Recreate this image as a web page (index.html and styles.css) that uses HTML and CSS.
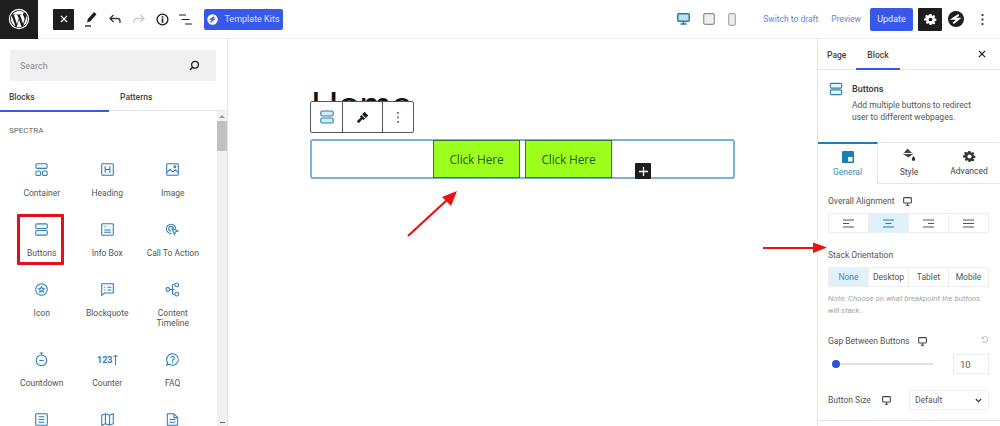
FILE: index.html
```html
<!DOCTYPE html>
<html lang="en">
<head>
<meta charset="utf-8">
<title>Editor</title>
<link rel="stylesheet" href="styles.css">
</head>
<body>
<div class="app">
  <header class="topbar">
    <div class="wp-logo">
      <svg width="24" height="24" viewBox="0 0 24 24"><circle cx="12" cy="12" r="9.6" fill="none" stroke="#fff" stroke-width="1.2"/><path fill="#fff" d="M3.9 12c0 3.2 1.9 6 4.6 7.3L4.6 8.7A8 8 0 0 0 3.9 12zM17.5 11.6c0-1-.4-1.7-.7-2.2-.4-.7-.8-1.3-.8-2 0-.8.6-1.5 1.4-1.5h.1A8.100 8.100 0 0 0 5.300 7.500h.5c.9 0 2.200-.1 2.200-.1.400 0 .5.600 0 .7 0 0-.4 0-1 .1l3 9.100 1.800-5.500-1.300-3.600c-.4 0-.9-.1-.9-.1-.4 0-.4-.7.100-.7 0 0 1.400.1 2.200.1.900 0 2.200-.1 2.200-.1.400 0 .5.600 0 .7 0 0-.4 0-1 .1l3 8.900.8-2.800c.4-1.100.6-1.900.6-2.600zM12.100 12.800l-2.500 7.200a8.100 8.100 0 0 0 5-.1l-.1-.1zM19.300 8.100c0 .3.100.6.100 1 0 .8-.2 1.700-.6 2.900l-2.500 7.100a8.100 8.100 0 0 0 3-11z"/></svg>
    </div>
    <div class="tools">
      <button class="close-btn"><svg width="12" height="12" viewBox="0 0 12 12"><path d="M3 3l6 6M9 3l-6 6" stroke="#fff" stroke-width="1.300"/></svg></button>
      <svg class="tool" width="14" height="16" viewBox="0 0 14 16"><path d="M10 1l2.500 2.200-6 7-3.500 1.300.9-3.500z" fill="#1e1e1e"/><path d="M1 15h6" stroke="#1e1e1e" stroke-width="1.300"/></svg>
      <svg class="tool" width="14" height="12" viewBox="0 0 14 12"><path d="M5.500 2L2 5.500 5.500 9M2 5.500h7.500c1.500 0 2.500 1 2.500 2.500v2" fill="none" stroke="#333" stroke-width="1.300"/></svg>
      <svg class="tool" width="14" height="12" viewBox="0 0 14 12"><path d="M8.500 2L12 5.500 8.500 9M12 5.500H4.500C3 5.500 2 6.500 2 8v2" fill="none" stroke="#ccc" stroke-width="1.300"/></svg>
      <svg class="tool" width="13" height="13" viewBox="0 0 14 14"><circle cx="7" cy="7" r="5.800" fill="none" stroke="#1e1e1e" stroke-width="1.400"/><path d="M7 6v4.500M7 3.500v1.500" stroke="#1e1e1e" stroke-width="1.800"/></svg>
      <svg class="tool" width="14" height="11" viewBox="0 0 14 11"><path d="M0 1h7M2.500 5.500h8M6 10h7" stroke="#1e1e1e" stroke-width="1.200"/></svg>
      <button class="kits"><svg width="11" height="11" viewBox="0 0 11 11"><circle cx="5.500" cy="5.500" r="5.200" fill="#fff"/><path d="M7.300 2.800L3.700 5.200h3.500L3.600 8.300" fill="none" stroke="#3858e9" stroke-width="1.300"/></svg>Template Kits</button>
    </div>
    <div class="actions">
      <div class="devices">
        <svg width="13" height="12" viewBox="0 0 13 12"><rect x=".8" y=".8" width="11.400" height="7.400" rx="1" fill="#bfe0ee" stroke="#1a7fb5" stroke-width="1.500"/><path d="M6.500 8.500v2.500M3.500 11h6" stroke="#1a7fb5" stroke-width="1.500"/></svg>
        <svg width="12" height="12" viewBox="0 0 12 12"><rect x=".7" y=".7" width="10.600" height="10.600" rx="1.500" fill="#eee" stroke="#8f8f8f" stroke-width="1.200"/></svg>
        <svg width="8" height="13" viewBox="0 0 8 13"><rect x=".7" y=".7" width="6.600" height="11.600" rx="1.200" fill="#eee" stroke="#a8a8a8" stroke-width="1.200"/></svg>
      </div>
      <a class="link draft">Switch to draft</a>
      <a class="link preview">Preview</a>
      <button class="update">Update</button>
      <button class="gear"><svg width="13" height="13" viewBox="-2 0 28 24"><path fill="#fff" d="M10 0h4l.7 3.200 2 .9 2.800-1.800 2.800 2.800-1.800 2.800.9 2 3.200.7v4l-3.200.7-.9 2 1.800 2.800-2.800 2.800-2.800-1.800-2 .9L14 24h-4l-.7-3.200-2-.9-2.800 1.800-2.800-2.800 1.800-2.800-.9-2L-2 14v-4l3.200-.7.9-2L.3 4.500l2.800-2.800 2.800 1.800 2-.9z"/><circle cx="12" cy="12" r="4" fill="#1e1e1e"/></svg></button>
      <svg class="spectra" width="16" height="16" viewBox="0 0 16 16"><circle cx="8" cy="8" r="8" fill="#1e1e1e"/><path d="M10.800 3.800L5 7.700h5.800L5.200 12.300" fill="none" stroke="#fff" stroke-width="2"/></svg>
      <svg class="dots" width="3" height="11" viewBox="0 0 3 11"><path d="M1.500 0v2M1.500 4.500v2M1.500 9v2" stroke="#333" stroke-width="1.800"/></svg>
    </div>
  </header>

  <main class="body">
    <aside class="inserter">
      <div class="search"><span>Search</span>
        <svg width="11" height="11" viewBox="0 0 11 11"><circle cx="6" cy="4.800" r="3.400" fill="none" stroke="#1e1e1e" stroke-width="1.300"/><path d="M3.500 7.300L1 10" stroke="#1e1e1e" stroke-width="1.500"/></svg>
      </div>
      <nav class="ins-tabs"><a class="ins-tab on">Blocks</a><a class="ins-tab">Patterns</a></nav>
      <div class="ins-main">
        <div class="ins-list">
          <h2 class="cat">SPECTRA</h2>
          <div class="grid">
            <div class="block"><svg class="bi" viewBox="0 0 16 16"><rect x="2" y="1.800" width="12" height="5" rx="1.500"/><rect x="2" y="9.500" width="5" height="5" rx="1.500"/><rect x="9" y="9.500" width="5" height="5" rx="1.500"/></svg><span>Container</span></div>
            <div class="block"><svg class="bi" viewBox="0 0 16 16"><rect x="1.800" y="1.800" width="12.400" height="12.400" rx="1"/><path d="M5.500 4.500v7M10.500 4.500v7M5.500 8h5"/></svg><span>Heading</span></div>
            <div class="block"><svg class="bi" viewBox="0 0 16 16"><rect x="1.800" y="1.800" width="12.400" height="12.400" rx="1"/><path d="M2 11l3.500-3 3 2.500 2.500-2 3 2.500"/><circle cx="10.500" cy="5" r="1"/></svg><span>Image</span></div>
            <div class="block picked"><svg class="bi" viewBox="0 0 16 16"><rect x="1.800" y="2" width="12.400" height="5" rx="1.500"/><rect x="1.800" y="9" width="12.400" height="5" rx="1.500"/></svg><span>Buttons</span></div>
            <div class="block"><svg class="bi" viewBox="0 0 16 16"><rect x="1.800" y="1.800" width="12.400" height="12.400" rx="1"/><path d="M4.500 5h1.500M4.500 8.500h7M4.500 11h7"/></svg><span>Info Box</span></div>
            <div class="block"><svg class="bi" viewBox="0 0 16 16"><path d="M11.500 7.500A5 5 0 1 0 7 12.300M9 7A2.500 2.500 0 1 0 6.500 9.500"/><path d="M7.500 7l6.500 2.500-2.800 1-1 2.800z"/></svg><span>Call To Action</span></div>
            <div class="block"><svg class="bi" viewBox="0 0 16 16"><circle cx="8" cy="8" r="6.200"/><path d="M8 5l.9 2 2.100.2-1.600 1.400.5 2.100L8 9.600l-1.900 1.100.5-2.100L5 7.200 7.100 7z"/></svg><span>Icon</span></div>
            <div class="block"><svg class="bi" viewBox="0 0 16 16"><path d="M1.800 1.800h12.400v10H5l-3.200 2.500z"/><path d="M4.500 5.500h1M4.500 8.500h1M8 5.500h4M8 8.500h4"/></svg><span>Blockquote</span></div>
            <div class="block"><svg class="bi" viewBox="0 0 16 16"><circle cx="3" cy="8" r="2"/><circle cx="12.500" cy="3" r="2"/><circle cx="12.500" cy="13" r="2"/><path d="M5 8h5M8 3h2.500M8 13h2.500M8 3v10"/></svg><span>Content Timeline</span></div>
            <div class="block"><svg class="bi" viewBox="0 0 16 16"><circle cx="8" cy="9" r="5.700"/><path d="M6 1h4M8 1v2.300M5.800 9h4.400"/></svg><span>Countdown</span></div>
            <div class="block"><b class="count">123<svg width="5" height="11" viewBox="0 0 5 11"><path d="M2.500 11V1M.5 3l2-2 2 2" fill="none" stroke="#2f7fb0" stroke-width="1"/></svg></b><span>Counter</span></div>
            <div class="block"><svg class="bi" viewBox="0 0 16 16"><path d="M8 1.800a6.200 6.200 0 1 1-3.500 11.300l-2.700 1 1-2.600A6.200 6.200 0 0 1 8 1.800z"/><path d="M6.200 6.300A1.900 1.900 0 1 1 8 8.500v1.500M8 11v1"/></svg><span>FAQ</span></div>
            <div class="block"><svg class="bi" viewBox="0 0 16 16"><rect x="1.800" y="1.800" width="12.400" height="12.400" rx="1"/><path d="M5 5h6M5 8h6M5 11h6"/></svg></div>
            <div class="block"><svg class="bi" viewBox="0 0 16 16"><path d="M1.800 3.500l4-1.700 4.400 1.700 4-1.700v10.700l-4 1.700-4.400-1.700-4 1.700zM5.800 2v10.500M10.200 3.500v10.500"/></svg></div>
            <div class="block"><svg class="bi" viewBox="0 0 16 16"><path d="M2.500 1.800h7l4 4v8.400h-11zM9.500 2v4h4M5 8h6M5 11h6"/></svg></div>
          </div>
        </div>
        <div class="scrollbar"><i class="up"></i><i class="thumb"></i><i class="down"></i></div>
      </div>
    </aside>

    <section class="canvas">
      <h1 class="title">Home</h1>
      <div class="toolbar">
        <div class="tb-cell c1"><svg width="16" height="16" viewBox="0 0 16 16" fill="#d5eaf6" stroke="#2f7fb0" stroke-width="1.100"><rect x="1.800" y="2" width="12.400" height="5" rx="1.500"/><rect x="1.800" y="9" width="12.400" height="5" rx="1.500"/></svg></div>
        <div class="tb-cell c2"><svg width="13" height="13" viewBox="0 0 14 14"><path d="M9.200.8l4 4-2.700 2.700-4-4z" fill="#1e1e1e"/><path d="M5.800 4.200l4 4-1.400 1.400-1.600-.6L3 13.200.8 11l4.200-3.800-.6-1.600z" fill="#1e1e1e"/></svg></div>
        <div class="tb-cell c3"><svg width="2" height="11" viewBox="0 0 2 11"><path d="M1 0v2M1 4.500v2M1 9v2" stroke="#555" stroke-width="1.400"/></svg></div>
      </div>
      <div class="group">
        <a class="cta">Click Here</a>
        <a class="cta">Click Here</a>
        <span class="plus"><svg width="9" height="9" viewBox="0 0 10 10"><path d="M5 0v10M0 5h10" stroke="#fff" stroke-width="1.400"/></svg></span>
      </div>
    </section>

    <aside class="settings">
      <nav class="set-tabs"><a class="set-tab">Page</a><a class="set-tab on">Block</a>
        <svg class="set-close" width="8" height="8" viewBox="0 0 9 9"><path d="M1 1l7 7M8 1L1 8" stroke="#1e1e1e" stroke-width="1.400"/></svg>
      </nav>
      <div class="card">
        <svg width="14" height="14" viewBox="0 0 16 16" fill="#e8f3fa" stroke="#2f7fb0" stroke-width="1.300"><rect x="1.500" y="1.500" width="13" height="5.500" rx="1.500"/><rect x="1.500" y="9" width="13" height="5.500" rx="1.500"/></svg>
        <div class="card-text"><h3>Buttons</h3><p>Add multiple buttons to redirect user to different webpages.</p></div>
      </div>
      <div class="kind-tabs">
        <a class="kind on"><svg width="12" height="12" viewBox="0 0 12 12"><path d="M0 1a1 1 0 0 1 1-1h10a1 1 0 0 1 1 1v10a1 1 0 0 1-1 1H1a1 1 0 0 1-1-1z" fill="#1a7fb5"/><rect x="6" y="6" width="4.500" height="4.500" fill="#fff"/></svg><span>General</span></a>
        <a class="kind style"><svg width="14" height="14" viewBox="0 0 14 14"><path d="M5.500 .5l5.500 5.500-4.500 3.500L1 6z" fill="#444"/><path d="M11.500 8c1 1.500 1.700 2.300 1.700 3.300a1.700 1.700 0 0 1-3.400 0c0-1 .7-1.800 1.700-3.300z" fill="#333"/><path d="M1.500 5.500h8.500" stroke="#fff"/></svg><span>Style</span></a>
        <a class="kind adv"><svg width="13" height="13" viewBox="-2 0 28 24"><path fill="#333" d="M10 0h4l.7 3.200 2 .9 2.800-1.800 2.800 2.800-1.800 2.800.9 2 3.200.7v4l-3.200.7-.9 2 1.800 2.800-2.800 2.800-2.800-1.800-2 .9L14 24h-4l-.7-3.200-2-.9-2.800 1.800-2.800-2.800 1.800-2.800-.9-2L-2 14v-4l3.200-.7.9-2L.3 4.500l2.800-2.800 2.800 1.800 2-.9z"/><circle cx="12" cy="12" r="4.500" fill="#fff"/></svg><span>Advanced</span></a>
      </div>
      <div class="panel">
        <div class="label first">Overall Alignment <svg class="mon" width="9" height="9" viewBox="0 0 10 10"><rect x=".7" y=".7" width="8.600" height="6" rx=".8" fill="none" stroke="#444" stroke-width="1.200"/><path d="M5 7v2M3 9.200h4" stroke="#444" stroke-width="1.200"/></svg></div>
        <div class="seg align">
          <a class="seg-i"><svg width="13" height="9" viewBox="0 0 13 9"><path d="M1 1h11M1 4.500h6M1 8h11" stroke="#555" stroke-width="1"/></svg></a>
          <a class="seg-i on"><svg width="13" height="9" viewBox="0 0 13 9"><path d="M1 1h11M3.500 4.500h6M1 8h11" stroke="#1a7fb5" stroke-width="1"/></svg></a>
          <a class="seg-i"><svg width="13" height="9" viewBox="0 0 13 9"><path d="M1 1h11M6 4.500h6M1 8h11" stroke="#555" stroke-width="1"/></svg></a>
          <a class="seg-i"><svg width="13" height="9" viewBox="0 0 13 9"><path d="M1 1h11M1 4.500h11M1 8h11" stroke="#555" stroke-width="1"/></svg></a>
        </div>
        <div class="label stack">Stack Orientation</div>
        <div class="seg text">
          <a class="seg-i on">None</a><a class="seg-i">Desktop</a><a class="seg-i">Tablet</a><a class="seg-i">Mobile</a>
        </div>
        <p class="note">Note: Choose on what breakpoint the buttons will stack.</p>
        <div class="label gap-label"><span>Gap Between Buttons</span><svg class="mon" width="9" height="9" viewBox="0 0 10 10"><rect x=".7" y=".7" width="8.600" height="6" rx=".8" fill="none" stroke="#444" stroke-width="1.200"/><path d="M5 7v2M3 9.200h4" stroke="#444" stroke-width="1.200"/></svg>
          <svg class="reset" width="8" height="8" viewBox="0 0 8 8"><path d="M1.500 1.500a3 3 0 1 1-.5 3.500M1 .5v2h2" fill="none" stroke="#aaa" stroke-width=".8"/></svg></div>
        <div class="slider-row">
          <div class="track"><i class="knob"></i></div>
          <div class="num">10</div>
        </div>
        <div class="size-row">
          <span class="size-label">Button Size</span>
          <svg class="mon" width="9" height="9" viewBox="0 0 10 10"><rect x=".7" y=".7" width="8.600" height="6" rx=".8" fill="none" stroke="#444" stroke-width="1.200"/><path d="M5 7v2M3 9.200h4" stroke="#444" stroke-width="1.200"/></svg>
          <div class="select"><span>Default</span><svg width="7" height="5" viewBox="0 0 7 5"><path d="M.8 1l2.700 2.700L6.200 1" fill="none" stroke="#333" stroke-width="1.100"/></svg></div>
        </div>
      </div>
      <div class="panel-end"></div>
    </aside>
  </main>

  <svg class="arrows" width="1000" height="426" viewBox="0 0 1000 426">
    <path d="M408 236L447 200" stroke="#ee1111" stroke-width="2.200"/>
    <path d="M457 191L451 206 442 197z" fill="#ee1111"/>
    <path d="M763 248H814" stroke="#ee1111" stroke-width="2.200"/>
    <path d="M827 247.500L813 242.500V253z" fill="#ee1111"/>
  </svg>
</div>
</body>
</html>
```
FILE: styles.css
```css
*, *::before, *::after { box-sizing: border-box; }
html, body { margin: 0; padding: 0; }
body { font-family: Roboto, "Noto Sans", sans-serif; color: #444; background: #fff; }
h1, h2, h3, p { margin: 0; font-weight: 400; }
button { border: 0; padding: 0; font: inherit; }
.app { position: relative; width: 1000px; height: 426px; overflow: hidden; display: flex; flex-direction: column; }

.topbar { height: 39px; flex: none; display: flex; align-items: center; border-bottom: 1px solid #eeeeee; }
.wp-logo { width: 38px; height: 39px; background: #1e1e1e; display: flex; align-items: center; justify-content: center; }
.tools { display: flex; align-items: center; margin-left: 15px; gap: 10px; }
.close-btn { width: 21px; height: 21px; background: #1e1e1e; display: flex; align-items: center; justify-content: center; border-radius: 1px; }
.tool { flex: none; }
.kits { margin-left: 1px; width: 79px; height: 21px; background: #3858e9; color: #dfe5ff; border-radius: 2px; font-size: 9px; display: flex; align-items: center; justify-content: center; gap: 6px; }
.actions { margin-left: auto; display: flex; align-items: center; }
.devices { display: flex; align-items: center; gap: 13px; margin-right: 27px; }
.link { font-size: 8.500px; color: #6c7fe0; }
.preview { margin-left: 13px; }
.update { margin-left: 9px; width: 43px; height: 23px; background: #3858e9; color: #e8ecff; font-size: 9px; border-radius: 2px; }
.gear { margin-left: 5px; width: 24px; height: 23px; background: #1e1e1e; display: flex; align-items: center; justify-content: center; border-radius: 1px; }
.spectra { margin-left: 6px; }
.dots { margin-left: 17px; margin-right: 16px; }

.body { flex: 1; min-height: 0; display: flex; }
.inserter { width: 228px; flex: none; border-right: 1px solid #e4e4e4; display: flex; flex-direction: column; }
.search { margin: 11px 11px 0 10px; height: 31px; background: #f0f0f0; border-radius: 1px; display: flex; align-items: center; justify-content: space-between; padding: 0 16px 0 10px; font-size: 9px; color: #8a8a8a; flex: none; }
.ins-tabs { display: flex; height: 30px; flex: none; border-bottom: 1px solid #e6e6e6; }
.ins-tab { width: 109px; padding: 11px 0 0 9px; font-size: 8.500px; font-weight: 500; color: #444; }
.ins-tab + .ins-tab { padding-left: 11px; }
.ins-tab.on { box-shadow: inset 0 -2px 0 #3858e9; height: 31px; }
.ins-main { flex: 1; min-height: 0; display: flex; }
.ins-list { flex: 1; min-width: 0; overflow: hidden; padding-top: 14px; }
.cat { font-size: 8px; color: #666; padding-left: 9px; line-height: 12px; }
.grid { display: grid; grid-template-columns: repeat(3, 65.500px); padding-left: 9px; margin-top: 25px; }
.block { padding-bottom: 24px; display: flex; flex-direction: column; align-items: center; text-align: center; font-size: 8.500px; line-height: 10px; color: #555; gap: 11px; }
.block span { width: 56px; }
.block .count { height: 15px; }
.bi { width: 15px; height: 15px; fill: #f4f9fd; stroke: #2f7fb0; stroke-width: 1.100; flex: none; }
.count { display: flex; align-items: center; color: #2f7fb0; font-size: 9px; font-weight: 700; }
.picked { position: relative; }
.picked::after { content: ""; position: absolute; left: 8px; top: -8px; width: 47px; height: 51px; border: 3px solid #e60e1c; border-radius: 1px; }
.scrollbar { width: 10px; flex: none; background: #f1f1f1; display: flex; flex-direction: column; align-items: center; }
.up { margin-top: 4px; width: 0; height: 0; border: 3px solid transparent; border-bottom-color: #999; border-top: 0; }
.thumb { width: 10px; height: 30px; margin-top: 3px; background: #c1c1c1; }
.down { margin-top: auto; margin-bottom: 3px; width: 5px; height: 1px; background: #666; }

.canvas { flex: 1; min-width: 0; position: relative; padding-left: 82px; overflow: hidden; }
.title { font-family: "Liberation Sans", sans-serif; font-size: 38px; line-height: 46px; color: #111; margin-top: 44px; height: 48px; padding-left: 1px; white-space: nowrap; overflow: hidden; }
.toolbar { position: absolute; left: 82px; top: 62px; width: 104px; height: 32px; display: flex; background: #fff; border: 1px solid #555; border-radius: 2px; }
.tb-cell { display: flex; align-items: center; justify-content: center; }
.c1 { width: 31px; }
.c2 { width: 40px; border-left: 1px solid #555; }
.c3 { flex: 1; border-left: 1px solid #555; }
.group { position: relative; margin-top: 8px; width: 425px; height: 40px; border: 2px solid #78b3d3; border-radius: 3px; display: flex; justify-content: center; align-items: flex-end; gap: 5px; }
.cta { width: 87px; height: 38px; margin-bottom: -1px; background: #9cff1c; border: 1px solid #3d6f40; display: flex; align-items: center; justify-content: center; font-size: 12px; color: #2b5a1e; font-family: "Open Sans", sans-serif; letter-spacing: -.2px; }
.plus { position: absolute; left: 323px; top: 22px; width: 16px; height: 16px; background: #1e1e1e; display: flex; align-items: center; justify-content: center; border-radius: 1px; }

.settings { width: 183px; flex: none; border-left: 1px solid #e6e6e6; display: flex; flex-direction: column; }
.set-tabs { height: 31px; flex: none; display: flex; align-items: flex-start; border-bottom: 1px solid #e6e6e6; padding-left: 9px; font-size: 8.500px; font-weight: 500; color: #444; }
.set-tab { padding-top: 11px; height: 31px; }
.set-tab + .set-tab { margin-left: 10px; padding: 11px 11px 0; box-shadow: inset 0 -2px 0 #3858e9; }
.set-close { margin-left: auto; margin-right: 14px; margin-top: 11px; }
.card { display: flex; gap: 9px; padding: 12px 11px 0 11px; height: 72px; flex: none; }
.card svg { flex: none; }
.card-text h3 { font-size: 9px; font-weight: 500; line-height: 12px; color: #333; margin-top: 1px; }
.card-text p { font-size: 8.500px; line-height: 12px; color: #555; margin-top: 4px; }
.kind-tabs { display: flex; height: 42px; flex: none; border-bottom: 1px solid #e6e6e6; }
.kind { width: 60px; display: flex; flex-direction: column; align-items: center; padding-top: 7px; gap: 3px; font-size: 8.500px; line-height: 12px; color: #444; border-top: 1px solid #e6e6e6; }
.kind.on { border-top: 2px solid #1a7fb5; border-right: 1px solid #e6e6e6; color: #3d8bb8; height: 42px; background: #fff; }
.kind.style { padding-top: 5px; margin-left: 1px; }
.kind.style span { margin-top: 1px; }
.kind.adv { gap: 2px; }
.panel { padding: 11px 11px 0 10px; flex: none; }
.label { font-size: 8.500px; line-height: 12px; color: #555; display: flex; align-items: center; }
.mon { flex: none; }
.first .mon { margin-left: 8px; }
.seg { display: flex; border: 1px solid #eeeeee; width: 161px; height: 20px; margin-top: 6px; }
.seg-i { flex: 1; display: flex; align-items: center; justify-content: center; border-left: 1px solid #eee; font-size: 8.500px; color: #555; }
.seg-i:first-child { border-left: 0; }
.seg-i.on { background: #dff1fb; color: #3d8bb8; }
.stack { margin-top: 16px; }
.note { font-size: 7.800px; font-style: italic; color: #a5a5a5; line-height: 12px; margin-top: 6px; width: 160px; }
.gap-label { margin-top: 18px; }
.gap-label .mon { margin-left: 9px; }
.reset { margin-left: auto; margin-top: -2px; }
.slider-row { display: flex; align-items: center; justify-content: space-between; margin-top: 7px; width: 161px; }
.track { position: relative; width: 101px; height: 2px; margin-left: 4px; background: #e0e0e0; }
.knob { position: absolute; left: 0; top: -3px; width: 8px; height: 8px; border-radius: 50%; background: #2f53d8; }
.num { width: 36px; height: 20px; border: 1px solid #eeeeee; font-size: 9.500px; color: #555; display: flex; align-items: center; padding-left: 6px; }
.size-row { display: flex; align-items: center; margin-top: 16px; font-size: 8.500px; color: #555; width: 161px; }
.size-row .mon { margin-left: 11px; }
.select { margin-left: auto; width: 80px; height: 20px; border: 1px solid #eeeeee; border-radius: 2px; display: flex; align-items: center; justify-content: space-between; padding: 0 6px 0 5px; color: #555; }
.panel-end { margin-top: 10px; border-top: 1px solid #e6e6e6; }

.arrows { position: absolute; left: 0; top: 0; pointer-events: none; }
```
